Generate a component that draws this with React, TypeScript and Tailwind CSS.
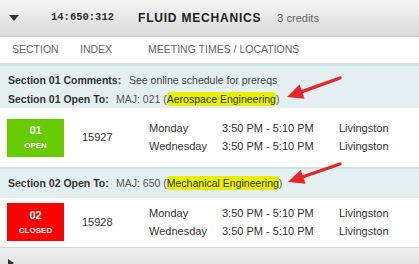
import React from 'react';

const font = { fontFamily: '"Liberation Sans", Arial, sans-serif' };

function Arrow({ x1, y1, x2, y2 }: { x1: number; y1: number; x2: number; y2: number }) {
  // arrow from tail (x1,y1) to tip (x2,y2)
  const ang = Math.atan2(y2 - y1, x2 - x1);
  const len = 16;
  const w = 7.5;
  const bx = x2 - Math.cos(ang) * len;
  const by = y2 - Math.sin(ang) * len;
  const px = -Math.sin(ang) * w;
  const py = Math.cos(ang) * w;
  return (
    <g>
      <line x1={x1} y1={y1} x2={bx} y2={by} stroke="#e8262a" strokeWidth={3.4} strokeLinecap="round" />
      <polygon points={`${x2},${y2} ${bx + px},${by + py} ${bx - px},${by - py}`} fill="#e8262a" />
    </g>
  );
}

function Meeting({ id, status }: { id: string; status: 'open' | 'closed' }) {
  const open = status === 'open';
  return (
    <div className="flex items-center h-[48px]">
      <div className="w-[82px] pl-[7px]">
        <div
          className={
            open
              ? 'w-[57px] h-[38px] bg-[#66cc00] flex flex-col items-center justify-center text-white'
              : 'w-[57px] h-[38px] bg-[#ff0000] flex flex-col items-center justify-center text-white'
          }
        >
          <span className="text-[11px] font-bold leading-[13px]">{open ? '01' : '02'}</span>
          <span className="text-[8px] font-bold leading-[10px] mt-[4px] [text-shadow:0_0_1px_rgba(0,0,0,0.35)]">
            {open ? 'OPEN' : 'CLOSED'}
          </span>
        </div>
      </div>
      <div className="w-[67px] text-[11px] text-[#333]">{id}</div>
      <div className="flex flex-col gap-[5px] text-[11px] text-[#333] leading-[13px]">
        {['Monday', 'Wednesday'].map((d) => (
          <div key={d} className="flex">
            <span className="w-[73px]">{d}</span>
            <span className="w-[117px]">3:50 PM - 5:10 PM</span>
            <span>Livingston</span>
          </div>
        ))}
      </div>
    </div>
  );
}

export default function App() {
  return (
    <div className="relative w-[419px] h-[264px] overflow-hidden bg-white" style={font}>
      {/* Course header */}
      <div className="h-[37px] flex items-center bg-gradient-to-b from-[#f5f5f5] to-[#d9d9d9] border-b border-[#cccccc]">
        <div className="w-[51px] pl-[9px]">
          <svg width="10" height="6" viewBox="0 0 10 6">
            <polygon points="0,0 10,0 5,6" fill="#333" />
          </svg>
        </div>
        <span
          className="w-[87px] text-[10.5px] font-bold text-[#333]"
          style={{ fontFamily: '"Liberation Mono", "Courier New", monospace' }}
        >
          14:650:312
        </span>
        <span className="text-[12px] font-bold text-[#222] tracking-[0.8px]">FLUID MECHANICS</span>
        <span className="ml-[16px] text-[11px] text-[#666]">3 credits</span>
      </div>

      {/* Column headings */}
      <div className="h-[27px] flex items-center text-[10.5px] text-[#666] border-b border-[#dddddd]">
        <span className="w-[80px] pl-[12px]">SECTION</span>
        <span className="w-[68px]">INDEX</span>
        <span>MEETING TIMES / LOCATIONS</span>
      </div>

      {/* Section 01 notes */}
      <div className="h-[44px] bg-[#e3eff0] border-t-2 border-[#cbe6e8] px-[8px] pt-[8px] flex flex-col gap-[6px] text-[10.5px] leading-[13px]">
        <div className="flex">
          <span className="font-bold text-[#333] w-[121px]">Section 01 Comments:</span>
          <span className="text-[#444]">See online schedule for prereqs</span>
        </div>
        <div className="flex">
          <span className="font-bold text-[#333] w-[108px]">Section 01 Open To:</span>
          <span className="text-[#555]">
            MAJ: 021 (<span className="bg-[#e6f000] rounded-[3px] text-[#333] py-[1px]">Aerospace Engineering</span>)
          </span>
        </div>
      </div>

      <div className="h-[59px] flex items-center">
        <div className="w-full">
          <Meeting id="15927" status="open" />
        </div>
      </div>

      {/* Section 02 notes */}
      <div className="h-[31px] bg-[#e3eff0] border-t-2 border-[#cbe6e8] px-[8px] flex items-center text-[10.5px]">
        <span className="font-bold text-[#333] w-[108px]">Section 02 Open To:</span>
        <span className="text-[#555]">
          MAJ: 650 (<span className="bg-[#e6f000] rounded-[3px] text-[#333] py-[1px]">Mechanical Engineering</span>)
        </span>
      </div>

      <Meeting id="15928" status="closed" />

      {/* Next course header */}
      <div className="h-[20px] mt-[1px] flex items-end bg-gradient-to-b from-[#eeeeee] to-[#e2e2e2] border-t border-[#d4d4d4] pl-[8px]">
        <svg width="6" height="8" viewBox="0 0 6 8">
          <polygon points="0,0 6,4 0,8" fill="#333" />
        </svg>
      </div>

      {/* Annotation arrows */}
      <svg className="absolute left-0 top-0 pointer-events-none" width="419" height="264">
        <Arrow x1={340} y1={78} x2={287} y2={97} />
        <Arrow x1={340} y1={164} x2={288} y2={182} />
      </svg>
    </div>
  );
}
